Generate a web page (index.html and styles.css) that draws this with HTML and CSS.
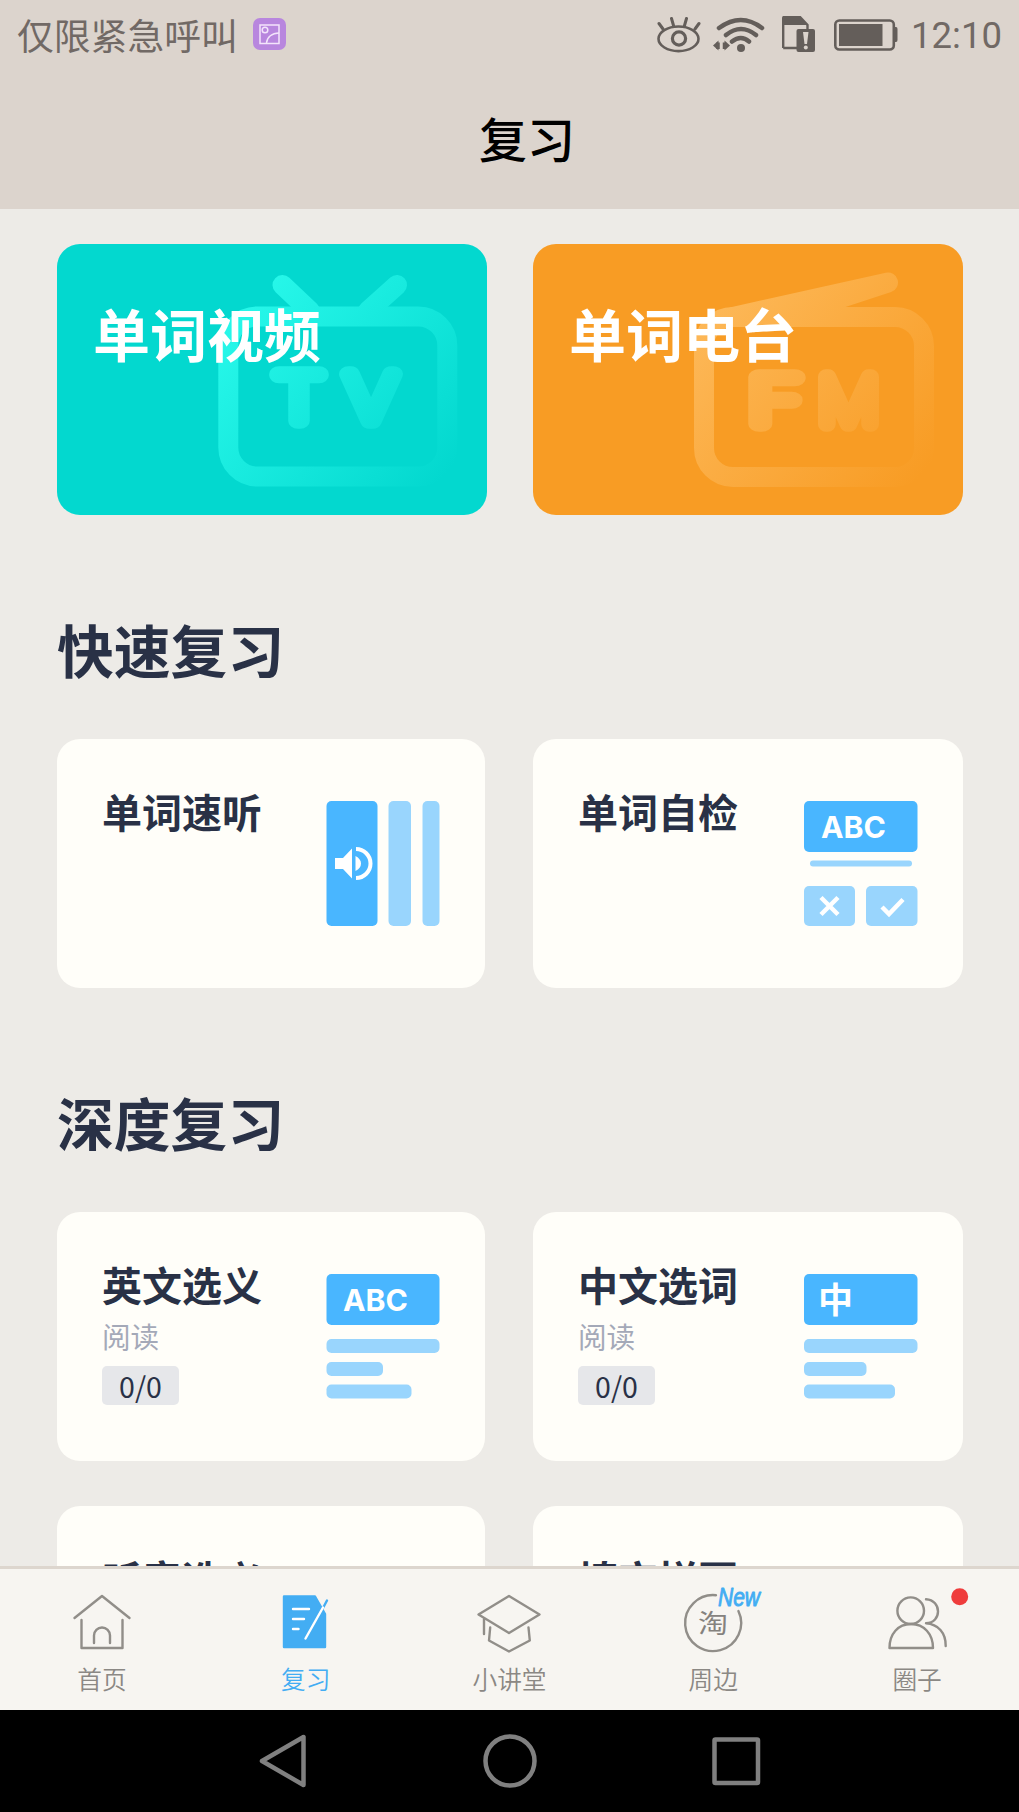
FILE: index.html
```html
<!DOCTYPE html>
<html lang="zh-CN">
<head>
  <meta charset="UTF-8">
  <meta name="viewport" content="width=device-width, initial-scale=1.0">
  <title>复习</title>
  <link rel="stylesheet" href="styles.css">
</head>
<body>
  <header class="header">
    <div class="status-bar">
      <span class="carrier">仅限紧急呼叫</span>
      <svg class="app-icon" width="33" height="32" viewBox="0 0 33 32">
        <rect width="33" height="32" rx="7" fill="#b886de"/>
        <g fill="none" stroke="#f3e4fb" stroke-width="1.5">
          <rect x="7" y="7" width="19" height="18.500"/>
          <circle cx="12" cy="12" r="2.800"/>
          <path d="M13.500 25C14 19 19 15 26 15"/>
        </g>
      </svg>
      <div class="status-icons">
        <svg width="44" height="36" viewBox="0 0 44 36" fill="none" stroke="#645e5a" stroke-width="2.600" stroke-linecap="round">
          <ellipse cx="21.500" cy="21.800" rx="20" ry="12.300"/>
          <circle cx="22" cy="21.500" r="6.600" stroke-width="3.200"/>
          <path d="M6 12L2 6.500M16.500 8.500L14.500 1.500M27.500 8.500L29.500 1.500M38 12L42 6.500" stroke-width="3"/>
        </svg>
        <svg class="wifi" width="52" height="36" viewBox="0 0 52 36" fill="none" stroke="#645e5a" stroke-width="4.500" stroke-linecap="round">
          <path d="M6 11Q28 -5 49 11M13 18Q28 6 43 18M19 24.500Q28 17.500 36 24.500"/>
          <circle cx="28" cy="31" r="4" fill="#645e5a" stroke="none"/>
          <path d="M0 28.500L5.500 23.500V33.500zM11.500 23.500L17 28.500L11.500 33.500z" fill="#645e5a" stroke="none"/>
          <path d="M5 25.500V32M11.500 25.500V32" stroke-width="3.500" stroke-linecap="butt"/>
        </svg>
        <svg class="sim" width="33" height="36" viewBox="0 0 33 36">
          <path d="M1.200 32V2Q1.200 1 2.200 1H18L25.500 9V18M1.200 32H16" fill="none" stroke="#645e5a" stroke-width="2.400"/>
          <path d="M1 1H18L25 9H1z" fill="#645e5a"/>
          <rect x="14.500" y="13" width="18.500" height="23" rx="2" fill="#645e5a"/>
          <path d="M21 16H26.500L25 28H22.500z" fill="#dcd4cd"/>
          <circle cx="23.800" cy="31.500" r="2" fill="#dcd4cd"/>
        </svg>
        <svg class="battery" width="64" height="32" viewBox="0 0 64 32">
          <rect x="1.300" y="1.500" width="58.500" height="29" rx="4" fill="none" stroke="#645e5a" stroke-width="2.600"/>
          <rect x="5" y="5" width="43.500" height="22" fill="#645e5a"/>
          <path d="M60 8h2q1.500 0 1.500 2v11q0 2-1.500 2h-2z" fill="#645e5a"/>
        </svg>
        <span class="time">12:10</span>
      </div>
    </div>
    <h1 class="page-title">复习</h1>
  </header>

  <main class="content">
    <div class="hero-row">
      <div class="hero hero-tv">
        <svg class="hero-art" width="430" height="272" viewBox="0 0 430 272">
          <defs>
            <linearGradient id="tv" gradientUnits="userSpaceOnUse" x1="180" y1="60" x2="385" y2="235">
              <stop offset="0" stop-color="#28f8ea"/>
              <stop offset="1" stop-color="#03d8cf"/>
            </linearGradient>
          </defs>
          <g fill="none" stroke="url(#tv)" stroke-width="20" stroke-linecap="round">
            <path d="M225.500 41L253 67M340 41L311 67"/>
            <rect x="171.300" y="72.500" width="219" height="160" rx="29"/>
          </g>
          <g class="art-letters" fill="url(#tv)" stroke="url(#tv)">
            <text x="217" y="177" textLength="50" lengthAdjust="spacingAndGlyphs">T</text>
            <text x="289" y="177" textLength="50" lengthAdjust="spacingAndGlyphs">V</text>
          </g>
        </svg>
        <h2 class="hero-title">单词视频</h2>
      </div>
      <div class="hero hero-fm">
        <svg class="hero-art" width="430" height="272" viewBox="0 0 430 272">
          <defs>
            <linearGradient id="fm" gradientUnits="userSpaceOnUse" x1="180" y1="60" x2="385" y2="235">
              <stop offset="0" stop-color="#fdb858"/>
              <stop offset="1" stop-color="#f89c24"/>
            </linearGradient>
          </defs>
          <g fill="none" stroke="url(#fm)" stroke-width="20" stroke-linecap="round" stroke-linejoin="round">
            <path d="M355 38.500L200 73H250z" fill="url(#fm)"/>
            <rect x="171" y="73" width="220" height="160" rx="29"/>
          </g>
          <g class="art-letters" fill="url(#fm)" stroke="url(#fm)">
            <text x="216" y="180" textLength="53" lengthAdjust="spacingAndGlyphs">F</text>
            <text x="285.500" y="180" textLength="60" lengthAdjust="spacingAndGlyphs">M</text>
          </g>
        </svg>
        <h2 class="hero-title">单词电台</h2>
      </div>
    </div>

    <h2 class="section-title">快速复习</h2>
    <div class="card-grid">
      <div class="card">
        <h3 class="card-title">单词速听</h3>
        <svg class="card-art" width="114" height="125" viewBox="0 0 114 125">
          <rect x="0.500" width="51" height="125" rx="5" fill="#49b6ff"/>
          <rect x="62.500" width="22.500" height="125" rx="5" fill="#99d5fd"/>
          <rect x="96.500" width="17" height="125" rx="5" fill="#99d5fd"/>
          <path d="M9 57H17L26 47.500V77.500L17 68H9zM29.500 55Q35 58 35 62.500T29.500 70z" fill="#fff"/>
          <path d="M30 48A14.500 14.500 0 0 1 30 77" fill="none" stroke="#fff" stroke-width="4"/>
        </svg>
      </div>
      <div class="card">
        <h3 class="card-title">单词自检</h3>
        <svg class="card-art" width="114" height="125" viewBox="0 0 114 125">
          <rect width="113.500" height="51" rx="5" fill="#49b6ff"/>
          <text class="art-abc" x="17" y="36.500" textLength="65" lengthAdjust="spacingAndGlyphs">ABC</text>
          <rect x="6" y="59.500" width="102" height="6" rx="3" fill="#99d5fd"/>
          <rect y="85" width="51" height="40" rx="5" fill="#99d5fd"/>
          <rect x="62" y="85" width="51.500" height="40" rx="5" fill="#99d5fd"/>
          <path d="M17 96.500L34 113.500M34 96.500L17 113.500M78 106L85 113L99 98.500" fill="none" stroke="#fff" stroke-width="4.500"/>
        </svg>
      </div>
    </div>

    <h2 class="section-title">深度复习</h2>
    <div class="card-grid">
      <div class="card">
        <div>
          <h3 class="card-title">英文选义</h3>
          <p class="card-sub">阅读</p>
          <span class="count">0/0</span>
        </div>
        <svg class="card-art" width="114" height="125" viewBox="0 0 114 125">
          <rect x="0.500" width="113" height="51" rx="5" fill="#49b6ff"/>
          <text class="art-abc" x="17" y="36.500" textLength="65" lengthAdjust="spacingAndGlyphs">ABC</text>
          <g fill="#99d5fd">
            <rect x="0.500" y="65" width="113" height="14" rx="5"/>
            <rect x="0.500" y="88" width="56.500" height="14" rx="5"/>
            <rect x="0.500" y="110.500" width="85" height="14" rx="5"/>
          </g>
        </svg>
      </div>
      <div class="card">
        <div>
          <h3 class="card-title">中文选词</h3>
          <p class="card-sub">阅读</p>
          <span class="count">0/0</span>
        </div>
        <svg class="card-art" width="114" height="125" viewBox="0 0 114 125">
          <rect width="113.500" height="51" rx="5" fill="#49b6ff"/>
          <text class="art-zh" x="14" y="39">中</text>
          <g fill="#99d5fd">
            <rect y="65" width="113.500" height="14" rx="5"/>
            <rect y="88" width="62.500" height="14" rx="5"/>
            <rect y="110.500" width="91" height="14" rx="5"/>
          </g>
        </svg>
      </div>
      <div class="card">
        <h3 class="card-title">听音选义</h3>
      </div>
      <div class="card">
        <h3 class="card-title">填空拼写</h3>
      </div>
    </div>
  </main>

  <nav class="tab-bar">
    <a class="tab">
      <svg class="tab-icon" viewBox="0 0 64 64">
        <path d="M4.500 28L32 6L59.500 28M11.500 30V58H52.500V30M24 53V45.500a8 8 0 0 1 16 0V53"/>
      </svg>
      <span>首页</span>
    </a>
    <a class="tab active">
      <svg class="tab-icon" viewBox="0 0 64 64">
        <path d="M10 6.500H41L51 24V57H10z" fill="#43adf3"/>
        <path d="M49 18L53 10.500"/>
        <path class="cut" d="M19 19H35M19 29H30M19 39H24.500M31.500 48.500L49 17.500"/>
      </svg>
      <span>复习</span>
    </a>
    <a class="tab">
      <svg class="tab-icon" viewBox="0 0 64 64">
        <path d="M1.500 24.500L32 6L62.500 24.500L32 43zM7 29V44M13.200 37.500L12 50.500L32 61.500L52.800 50.500L51.500 37.500"/>
      </svg>
      <span>小讲堂</span>
    </a>
    <a class="tab">
      <svg class="tab-icon" viewBox="0 0 64 64">
        <path d="M35 5.200A28 28 0 1 0 57.400 21"/>
        <text class="tao" x="17" y="42.500" textLength="30" lengthAdjust="spacingAndGlyphs">淘</text>
        <text class="new" x="37" y="16" textLength="42" lengthAdjust="spacingAndGlyphs">New</text>
      </svg>
      <span>周边</span>
    </a>
    <a class="tab">
      <svg class="tab-icon" viewBox="0 0 64 64">
        <circle cx="25.700" cy="20.700" r="13.300"/>
        <path d="M4.500 58C4.500 44 13 34 26 34S48 44 48 58zM41 9.200C57 10 57 33 41 33.200C53 34 61 43 60.700 56"/>
        <circle class="dot" cx="74.700" cy="6.700" r="8.500"/>
      </svg>
      <span>圈子</span>
    </a>
  </nav>

  <div class="system-nav">
    <svg width="54" height="54" viewBox="0 0 54 54"><path d="M6 27L47.500 3V51z"/></svg>
    <svg width="54" height="54" viewBox="0 0 54 54"><circle cx="27" cy="27" r="24.500"/></svg>
    <svg width="54" height="54" viewBox="0 0 54 54"><rect x="5.500" y="5.500" width="43.500" height="43.500" rx="1"/></svg>
  </div>
</body>
</html>
```
FILE: styles.css
```css
* {
  box-sizing: border-box;
  margin: 0;
  padding: 0;
}

body {
  font-family: Roboto, "Noto Sans CJK SC", sans-serif;
  background-color: #edebe7;
  color: #293146;
  height: 1812px;
  display: flex;
  flex-direction: column;
  overflow: hidden;
}

/* Status bar + title */
.header {
  height: 209px;
  flex-shrink: 0;
  background-color: #dcd4cd;
}

.status-bar {
  height: 70px;
  display: flex;
  align-items: center;
  padding: 0 17px 0 17px;
  color: #716965;
}

.carrier {
  font-family: "Noto Sans CJK SC", sans-serif;
  font-size: 36.8px;
  line-height: 70px;
  margin-bottom: 2px;
}

.app-icon {
  margin-left: 15px;
  margin-bottom: 2px;
}

.status-icons {
  display: flex;
  align-items: center;
  margin-left: auto;
}

.wifi {
  margin-left: 12px;
}

.sim {
  margin-left: 17px;
  margin-bottom: 2px;
}

.battery {
  margin-left: 19px;
}

.time {
  font-size: 36.5px;
  margin-left: 13px;
}

.page-title {
  font-size: 48px;
  font-weight: 500;
  line-height: 60px;
  margin-top: 37px;
  padding-left: 35px;
  text-align: center;
  color: #000;
  font-family: "Noto Sans CJK SC", sans-serif;
}

/* Scrolling content */
.content {
  height: 1357px;
  padding: 34.5px 56px 0 57px;
  overflow: hidden;
  font-family: "Noto Sans CJK SC", sans-serif;
}

.hero-row {
  display: grid;
  grid-template-columns: 430px 430px;
  justify-content: space-between;
}

.hero {
  position: relative;
  height: 271.5px;
  padding: 58px 0 0 36px;
  border-radius: 23px;
  overflow: hidden;
}

.hero-tv {
  background-color: #03d8cf;
}

.hero-fm {
  background-color: #f89c24;
}

.hero-art {
  position: absolute;
  left: 0;
  top: 0;
}

.art-letters {
  font-family: Inter, sans-serif;
  font-size: 64px;
  font-weight: 100;
  stroke-width: 15.5px;
  stroke-linejoin: round;
}

.hero-title {
  position: relative;
  font-size: 57px;
  line-height: 60px;
  color: #fff;
}

.section-title {
  font-size: 56.8px;
  line-height: 60px;
  margin: 103px 0 61px;
}

.card-grid {
  display: grid;
  grid-template-columns: 428px 430px;
  justify-content: space-between;
  row-gap: 45px;
}

.card {
  display: flex;
  justify-content: space-between;
  height: 249px;
  padding: 50px 45px 0;
  border-radius: 23px;
  background-color: #fffef9;
}

.card-title {
  font-size: 40px;
  line-height: 44px;
}

.card-sub {
  font-size: 28.6px;
  line-height: 36px;
  margin-top: 12px;
  color: #a4a9b8;
}

.count {
  display: block;
  width: 77px;
  height: 39px;
  margin-top: 12px;
  border-radius: 5px;
  background-color: #e6e7ea;
  font-family: "Noto Sans CJK SC", sans-serif;
  font-size: 28.5px;
  line-height: 39px;
  text-align: center;
}

.card-art {
  margin-top: 12px;
}

.art-abc {
  font-family: Inter, sans-serif;
  font-size: 30px;
  font-weight: 700;
  fill: #fff;
}

.art-zh {
  font-size: 35px;
  font-weight: 700;
  fill: #fff;
}

/* Bottom tabs */
.tab-bar {
  height: 144px;
  flex-shrink: 0;
  display: flex;
  border-top: 3px solid #ddd6ce;
  background-color: #f7f5f1;
}

.tab {
  flex: 1;
  display: flex;
  flex-direction: column;
  align-items: center;
  padding-top: 21px;
  font-family: "Noto Sans CJK SC", sans-serif;
  font-size: 24.7px;
  font-weight: 350;
  line-height: 30px;
  color: #8b8884;
}

.tab-icon {
  width: 64px;
  height: 64px;
  margin-bottom: 9px;
  overflow: visible;
  fill: none;
  stroke: #918e89;
  stroke-width: 2.4;
  stroke-linecap: round;
  stroke-linejoin: round;
}

.active {
  color: #43adf3;
}

.active .tab-icon {
  stroke: #43adf3;
}

.active .cut {
  stroke: #fff;
}

.tao {
  font-size: 26px;
  font-weight: 400;
  fill: #85827e;
  stroke: none;
}

.new {
  font-family: "Liberation Sans", sans-serif;
  font-size: 25px;
  font-weight: 400;
  font-style: italic;
  fill: #43adf3;
  stroke: #43adf3;
  stroke-width: 0.9px;
}

.dot {
  fill: #ef3c3c;
  stroke: none;
}

/* Android navigation */
.system-nav {
  height: 102px;
  flex-shrink: 0;
  display: flex;
  align-items: center;
  justify-content: center;
  gap: 172.5px;
  background-color: #000;
}

.system-nav svg {
  fill: none;
  stroke: #808080;
  stroke-width: 4.5;
  stroke-linejoin: round;
}
```
